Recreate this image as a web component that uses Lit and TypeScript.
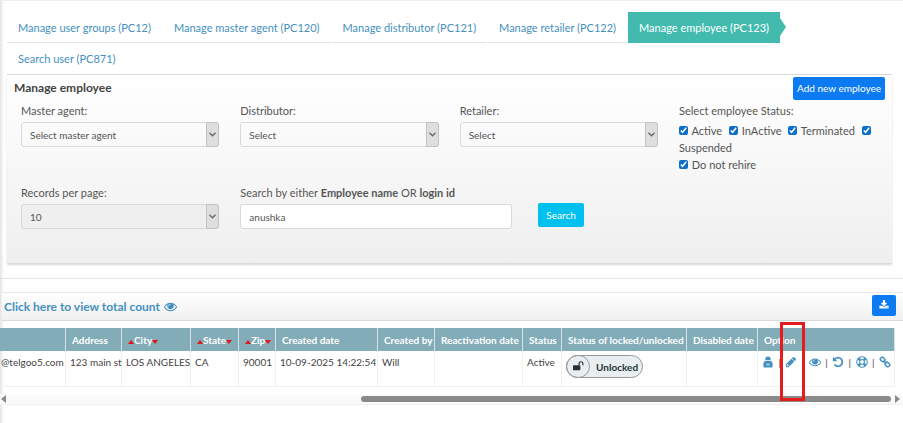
import { LitElement, html, css, svg } from "lit";
import { customElement, property } from "lit/decorators.js";
import { classMap } from "lit/directives/class-map.js";

const shapes: Record<string, { box: string; body: unknown }> = {
  eye: {
    box: "0 0 1792 1792",
    body: svg`<path d="M1664 960q-152-236-381-353 61 104 61 225 0 185-131.5 316.500t-316.500 131.500-316.500-131.500-131.500-316.500q0-121 61-225-229 117-381 353 133 205 333.500 326.500t434.500 121.500 434.500-121.500 333.500-326.500zM944 576q0-20-14-34t-34-14q-125 0-214.500 89.500t-89.500 214.500q0 20 14 34t34 14 34-14 14-34q0-86 61-147t147-61q20 0 34-14t14-34zM1792 960q0 34-20 69-140 230-376.500 368.500t-499.500 138.500-499.500-139-376.500-368q-20-35-20-69t20-69q140-229 376.500-368t499.500-139 499.500 139 376.500 368q20 35 20 69z"/><circle cx="896" cy="832" r="230" opacity=".6"/>`,
  },
  pencil: {
    box: "0 0 1792 1792",
    body: svg`<path d="M491 1536l91-91-235-235-91 91v107h128v128h107zM960 416l416 416-832 832h-416v-416zM1643 512q0 53-37 90l-166 166-416-416 166-165q36-38 90-38 53 0 91 38l235 234q37 39 37 91z"/>`,
  },
  undo: {
    box: "0 0 1792 1792",
    body: svg`<path d="M1664 896q0 156-61 298t-164 245-245 164-298 61q-172 0-327-72.500t-264-204.500q-7-10-6.500-22.500t8.500-20.500l137-138q10-9 25-9 16 2 23 12 73 95 179 147t225 52q104 0 198.500-40.500t163.500-109.500 109.500-163.500 40.500-198.500-40.500-198.500-109.500-163.500-163.500-109.500-198.500-40.500q-98 0-188 35.500t-160 101.500l137 138q31 30 14 69-17 40-59 40h-448q-26 0-45-19t-19-45v-448q0-42 40-59 39-17 69 14l130 129q107-101 244.500-156.500t284.500-55.500q156 0 298 61t245 164 164 245 61 298z"/>`,
  },
  download: {
    box: "0 0 1792 1792",
    body: svg`<path d="M1344 1344q0-26-19-45t-45-19-45 19-19 45 19 45 45 19 45-19 19-45zm256 0q0-26-19-45t-45-19-45 19-19 45 19 45 45 19 45-19 19-45zm128-224v320q0 40-28 68t-68 28h-1472q-40 0-68-28t-28-68v-320q0-40 28-68t68-28h465l135 136q58 56 136 56t136-56l136-136h464q40 0 68 28t28 68zm-325-569q17 41-14 70l-448 448q-18 19-45 19t-45-19l-448-448q-31-29-14-70 17-39 59-39h256v-448q0-26 19-45t45-19h256q26 0 45 19t19 45v448h256q42 0 59 39z"/>`,
  },
  reset: {
    box: "0 0 12 12",
    body: svg`<path d="M3.200 4.200C3.200 1.600 4.200.5 6 .5s2.800 1.100 2.800 3.700zM2.800 5h6.400l1.400 2v3.500q0 1-.9 1H2.300q-.9 0-.9-1V7z"/><path d="M4.500 6.800L6 8.300l1.500-1.500v2.600h-3z" fill="#fff" opacity=".6"/>`,
  },
  ring: {
    box: "0 0 12 12",
    body: svg`<circle cx="6" cy="6" r="5.300" fill="none" stroke="currentColor"/><circle cx="6" cy="6" r="2.400" fill="none" stroke="currentColor"/><path d="M2.200 2.200l2.100 2.100M9.800 2.200L7.700 4.300M2.200 9.800l2.100-2.100M9.800 9.800L7.700 7.700" stroke="currentColor" stroke-width="2.600"/>`,
  },
  link: {
    box: "0 0 12 12",
    body: svg`<g fill="none" stroke="currentColor" stroke-width="1.500"><rect x="1.200" y="1.700" width="4.800" height="3.600" rx="1.600" transform="rotate(45 3.600 3.500)"/><rect x="6" y="6.700" width="4.800" height="3.600" rx="1.600" transform="rotate(45 8.400 8.500)"/><path d="M4.600 4.600l2.800 2.800"/></g>`,
  },
  unlock: {
    box: "0 0 12 12",
    body: svg`<rect x="0" y="4.500" width="8" height="5.500" rx=".6"/><path d="M6.600 5V2.900a2.100 2.100 0 0 1 4.200 0V4.500" fill="none" stroke="currentColor" stroke-width="1.300"/>`,
  },
};

@customElement("ui-icon")
export class UiIcon extends LitElement {
  @property() name = "eye";
  static styles = css`
    :host { display: inline-flex; width: 12px; height: 12px; }
    svg { width: 100%; height: 100%; fill: currentColor; }
  `;
  render() {
    const s = shapes[this.name];
    return html`<svg viewBox=${s.box} aria-hidden="true">${s.body}</svg>`;
  }
}

const tabs = [
  { label: "Manage user groups (PC12)" },
  { label: "Manage master agent (PC120)" },
  { label: "Manage distributor (PC121)" },
  { label: "Manage retailer (PC122)" },
  { label: "Manage employee (PC123)", current: true },
  { label: "Search user (PC871)" },
];

const columns = [
  { key: "email", label: "", value: "@telgoo5.com" },
  { key: "address", label: "Address", value: "123 main st" },
  { key: "city", label: "City", value: "LOS ANGELES", sort: true },
  { key: "state", label: "State", value: "CA", sort: true },
  { key: "zip", label: "Zip", value: "90001", sort: true },
  { key: "created", label: "Created date", value: "10-09-2025 14:22:54" },
  { key: "by", label: "Created by", value: "Will" },
  { key: "reactivated", label: "Reactivation date", value: "" },
  { key: "status", label: "Status", value: "Active" },
  { key: "lock", label: "Status of locked/unlocked", value: "" },
  { key: "disabled", label: "Disabled date", value: "" },
  { key: "option", label: "Option", value: "" },
];

const actions = [
  { icon: "reset", label: "Reset password" },
  { icon: "pencil", label: "Edit" },
  { icon: "eye", label: "View" },
  { icon: "undo", label: "Undo" },
  { icon: "ring", label: "Support" },
  { icon: "link", label: "Link" },
];

@customElement("app-root")
export class AppRoot extends LitElement {
  static styles = css`
    :host {
      display: block;
      min-height: 100vh;
      box-sizing: border-box;
      border-top: 1px solid #e9eef3;
      background: linear-gradient(90deg, #e4e4e4, #fff 4px);
      font: 11px/16px Lato, sans-serif;
      color: #555;
    }
    *, *::before, *::after { box-sizing: border-box; }
    a { color: #4490c0; text-decoration: none; }
    button { font: inherit; border: 0; border-radius: 2px; color: #fff; cursor: pointer; }
    .tabs {
      display: flex;
      flex-wrap: wrap;
      margin: 11px 11px 0 7px;
      border-bottom: 1px solid #d8d8d8;
    }
    .tab { padding: 8px 11px 6px; border-bottom: 1px solid #e6e6e6; margin-right: 1px; }
    .tab.current {
      position: relative;
      background: #42bbae;
      border-color: #42bbae;
      color: #fff;
    }
    .tab.current::after {
      content: "";
      position: absolute;
      left: 100%;
      top: 6px;
      border: solid transparent;
      border-width: 9px 0 9px 6px;
      border-left-color: #42bbae;
    }
    .tab.last { border-color: transparent; }
    .panel {
      margin: 0 11px 0 7px;
      padding: 1px 0 34px 7px;
      background: linear-gradient(#fff, #efefef);
      border-bottom: 1px solid #dcdcdc;
      box-shadow: 0 1px 2px #d8d8d8;
    }
    .head { display: flex; justify-content: space-between; align-items: center; padding-right: 7px; }
    h1 { margin: 0; font-size: 12px; line-height: 24px; color: #444; }
    .add { height: 23px; padding: 0 4px; background: #0c7bf2; font-size: 10px; }
    .form {
      display: grid;
      grid-template-columns: repeat(3, 1fr) 213px;
      padding: 3px 0 0 7px;
      row-gap: 12px;
    }
    .field { display: flex; flex-direction: column; gap: 3px; padding-right: 21px; min-width: 0; }
    .control {
      appearance: none;
      width: 100%;
      height: 25px;
      margin: 0;
      padding: 0 8px;
      font: 10px/16px Lato, sans-serif;
      color: #555;
      border: 1px solid #d9d9d9;
      border-radius: 3px;
      background: #fff;
    }
    .drop { display: grid; }
    .drop > * { grid-area: 1 / 1; }
    .drop .control { background: transparent; }
    .drop .filled { background: #efefef; }
    .arrow {
      justify-self: end;
      display: grid;
      place-items: center;
      width: 13px;
      height: 25px;
      background: #dedede;
      border: 1px solid #c3c3c3;
      border-radius: 0 3px 3px 0;
      pointer-events: none;
    }
    .arrow svg { width: 7px; height: 5px; fill: none; stroke: #666; stroke-width: 1.300; }
    .wide { grid-column: span 2; display: flex; align-items: flex-start; gap: 26px; }
    .wide .field { width: 272px; padding: 0; }
    .search { height: 24px; margin-top: 18px; padding: 0 8px; background: #00c0ef; font-size: 10px; }
    fieldset { border: 0; margin: 0; padding: 0; min-width: 0; }
    legend { padding: 0; margin-bottom: 3px; }
    .checks label { margin-right: 4px; line-height: 17px; }
    .checks input { width: 9px; height: 9px; margin: 0 1px 0 0; accent-color: #0b6fc9; }
    .rule { margin-top: 14px; border-top: 1px solid #e2e4ea; }
    .bar {
      display: flex;
      justify-content: space-between;
      align-items: center;
      height: 29px;
      margin: 13px 0 7px 2px;
      padding: 0 7px 0 2px;
      border: solid #eaeaea;
      border-width: 1px 0;
      border-bottom-color: #dadada;
      background: linear-gradient(#fff, #f0f0f0);
    }
    .total { display: flex; align-items: center; gap: 4px; font-size: 12px; font-weight: bold; }
    .total ui-icon { width: 13px; height: 13px; }
    .download { display: grid; place-items: center; width: 24px; height: 21px; padding: 0; background: #0c7bf2; margin-bottom: 3px; }
    .download ui-icon { width: 10px; height: 10px; }
    .table { padding: 0 8px 0 0; }
    table { width: 100%; table-layout: fixed; border-collapse: separate; border-spacing: 0; font-size: 10px; }
    th, td { text-align: left; white-space: nowrap; border-right: 1px solid #f0f0f0; }
    th { height: 23px; padding: 0 0 0 6px; background: #82acb8; border-color: #d5e4e8; color: #fff; }
    td { height: 36px; padding: 3px 0 0 4px; vertical-align: top; border-bottom: 1px solid #f0f0f0; color: #444; }
    td.email { padding-left: 1px; }
    .email { width: 66px; }
    .address { width: 56px; }
    .city { width: 69px; }
    .state { width: 48px; }
    .zip { width: 37px; }
    .created { width: 102px; }
    .by { width: 57px; }
    .reactivated { width: 88px; }
    .status { width: 39px; }
    .lock { width: 125px; }
    .disabled { width: 71px; }
    .sort::before, .sort::after {
      content: "";
      display: inline-block;
      border: solid transparent;
      border-width: 0 3px 4px;
      border-bottom-color: #e01616;
    }
    .sort::after { border-width: 4px 3px 0; border-top-color: #e01616; }
    .pill {
      display: flex;
      align-items: center;
      gap: 6px;
      width: 77px;
      height: 23px;
      margin-top: 1px;
      padding: 0;
      border: 1px solid #999;
      border-radius: 12px;
      background: #e9eef0;
      color: #263238;
      font-weight: bold;
    }
    .knob { display: grid; place-items: center; width: 24px; height: 23px; margin-left: -1px; border: 1px solid #999; border-radius: 12px; }
    .knob ui-icon { width: 11px; height: 11px; }
    td.option { padding-right: 3px; }
    .actions { display: flex; align-items: center; justify-content: space-between; }
    .actions a { position: relative; display: flex; }
    .mark { position: absolute; left: -5px; top: -34px; width: 25px; height: 79px; border: 3px solid #e51c1c; pointer-events: none; }
    .scroll {
      display: flex;
      align-items: center;
      height: 11px;
      margin-top: 7px;
      padding: 0 3px 0 1px;
      background: #fafafa;
      border-bottom: 1px solid #f0f0f0;
    }
    .scroll i { border: solid transparent; border-width: 4px 5px 4px 0; border-right-color: #8a8a8a; }
    .scroll i:last-child { border-width: 4px 0 4px 5px; border-left-color: #8a8a8a; margin-left: 4px; }
    .thumb { width: 59%; height: 6px; margin-left: auto; border-radius: 3px; background: #8a8a8a; }
  `;

  private drop(id: string, label: string, value: string, filled = false) {
    return html`<div class="field">
      <label for=${id}>${label}</label>
      <div class="drop">
        <select id=${id} class=${classMap({ control: true, filled })}><option>${value}</option></select>
        <span class="arrow"><svg viewBox="0 0 7 5"><path d="M.5 .8l3 3 3-3" /></svg></span>
      </div>
    </div>`;
  }

  private cell(c: (typeof columns)[number]) {
    if (c.key === "lock")
      return html`<button class="pill"><span class="knob"><ui-icon name="unlock"></ui-icon></span>Unlocked</button>`;
    if (c.key === "option")
      return html`<div class="actions">
        ${actions.map(
          (a, i) => html`${i ? html`<span>|</span>` : ""}<a href="#" aria-label=${a.label}
              ><ui-icon name=${a.icon}></ui-icon>${a.icon === "pencil" ? html`<span class="mark"></span>` : ""}</a>`
        )}
      </div>`;
    return c.value;
  }

  render() {
    return html`
      <nav class="tabs">
        ${tabs.map(
          (t, i) => html`<a href="#" class=${classMap({ tab: true, current: !!t.current, last: i === tabs.length - 1 })}>${t.label}</a>`
        )}
      </nav>
      <section class="panel">
        <div class="head"><h1>Manage employee</h1><button class="add">Add new employee</button></div>
        <div class="form">
          ${this.drop("agent", "Master agent:", "Select master agent")}
          ${this.drop("distributor", "Distributor:", "Select")}
          ${this.drop("retailer", "Retailer:", "Select")}
          <fieldset class="checks">
            <legend>Select employee Status:</legend>
            <label><input type="checkbox" checked /> Active</label>
            <label><input type="checkbox" checked /> InActive</label>
            <label><input type="checkbox" checked /> Terminated</label>
            <label><input type="checkbox" checked /> Suspended</label><br />
            <label><input type="checkbox" checked /> Do not rehire</label>
          </fieldset>
          ${this.drop("records", "Records per page:", "10", true)}
          <div class="wide">
            <div class="field">
              <label for="query">Search by either <b>Employee name</b> OR <b>login id</b></label>
              <input id="query" class="control" type="text" .value=${"anushka"} />
            </div>
            <button class="search">Search</button>
          </div>
        </div>
      </section>
      <div class="rule"></div>
      <div class="bar">
        <a href="#" class="total">Click here to view total count <ui-icon name="eye"></ui-icon></a>
        <button class="download" aria-label="Download"><ui-icon name="download"></ui-icon></button>
      </div>
      <div class="table">
        <table>
          <thead>
            <tr>${columns.map((c) => html`<th class=${c.key}><span class=${classMap({ sort: !!c.sort })}>${c.label}</span></th>`)}</tr>
          </thead>
          <tbody>
            <tr>${columns.map((c) => html`<td class=${c.key}>${this.cell(c)}</td>`)}</tr>
          </tbody>
        </table>
      </div>
      <div class="scroll"><i></i><span class="thumb"></span><i></i></div>
    `;
  }
}
